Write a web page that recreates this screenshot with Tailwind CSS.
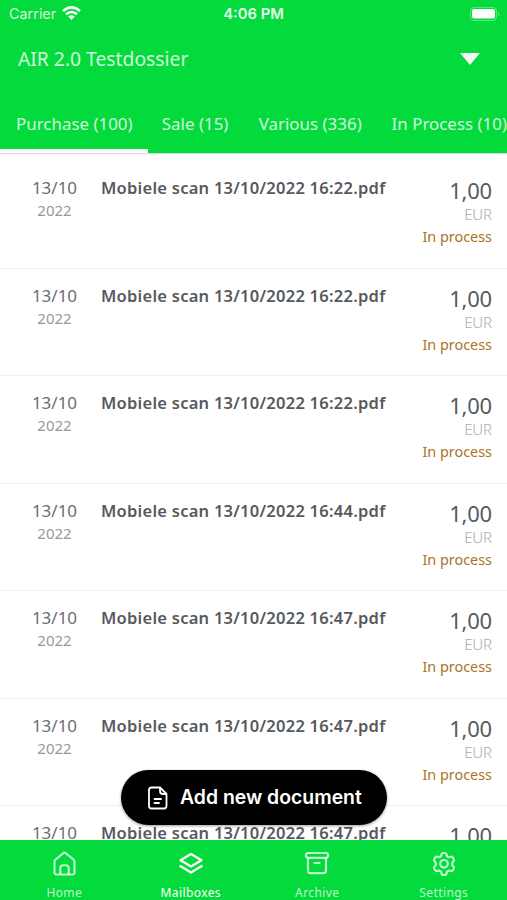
<!DOCTYPE html>
<html lang="en">
<head>
<meta charset="utf-8">
<title>Mailboxes</title>
<script src="https://cdn.jsdelivr.net/npm/@tailwindcss/browser@4"></script>
</head>
<body class="bg-white">
<div class="relative flex h-[900px] w-[507px] flex-col overflow-hidden bg-white font-['Noto_Sans',sans-serif] whitespace-nowrap">
  <header class="flex h-[154px] shrink-0 flex-col border-b border-[#c9e0cf] bg-[#03da3c] text-white">
    <div class="grid h-7 grid-cols-3 items-center pl-[9px] pr-[7px] font-[Inter,sans-serif]">
      <div class="flex items-center gap-1.5 text-[14.4px] text-white/80"><span>Carrier</span>
        <svg class="mb-0.5 h-[14px] w-[19px]" viewBox="0 0 19 14" fill="none" stroke="#fff" stroke-width="2.5"><path d="M1 5.1Q9.500-2.300 18 5.100M4 8.300q5.500-4.600 11 0"/><path d="M6.200 10.600q3.300-2.700 6.600 0L9.500 14z" fill="#fff" stroke="none"/></svg>
      </div>
      <div class="-ml-[2px] text-center text-[14.8px] font-semibold text-white/90">4:06 PM</div>
      <svg class="h-[14px] w-[30px] justify-self-end" viewBox="0 0 30 14"><rect x=".5" y=".5" width="26" height="13" rx="3.5" fill="none" stroke="#fff" stroke-opacity=".35"/><rect x="2" y="2" width="23" height="9.500" rx="2" fill="#fff"/><path d="M28 5q2 2 0 4z" fill="#fff" fill-opacity=".5"/></svg>
    </div>
    <div class="flex h-[62px] items-center justify-between pl-[18px] pr-[27px]">
      <h1 class="text-[19.3px] text-white/80">AIR 2.0 Testdossier</h1>
      <svg class="h-3 w-5" viewBox="0 0 20 12"><path d="M0 0h20L10 12z" fill="#f4f4f4"/></svg>
    </div>
    <nav class="flex h-[63px] text-[16.9px] leading-[68px] tracking-[0.01px] text-white/80">
      <div class="w-[148px] border-b-[4px] border-white pl-4">Purchase (100)</div>
      <div class="w-[97px] pl-[14px]">Sale (15)</div>
      <div class="w-[132px] pl-[14px]">Various (336)</div>
      <div class="pl-[15px]">In Process (10)</div>
    </nav>
  </header>
  <main id="list" class="min-h-0 flex-1 overflow-hidden pt-[7px]"></main>
  <template id="row">
    <article class="flex h-[107.5px] border-b border-[#f0f0f0] pr-[15px] pl-[23px] text-[#555a60]">
      <div class="w-[63px] pt-4 text-center"><div class="text-[17px] leading-[22px] text-[#6b6e72]">13/10</div><div class="text-[15px] leading-[22px] text-[#999]">2022</div></div>
      <div class="doc flex-1 pt-4 pl-[15px] text-[16.5px] leading-[22px] font-semibold tracking-[0.25px]"></div>
      <div class="flex flex-col pt-4 text-right"><span class="text-[22px] leading-[27px] tracking-[-0.2px]">1,00</span><span class="text-[15px] leading-[20px] font-light tracking-[-0.1px] text-[#aaa]">EUR</span><span class="text-[14.4px] leading-[25px] text-[#aa7426]">In process</span></div>
    </article>
  </template>
  <footer class="grid h-[60px] shrink-0 grid-cols-4 bg-[#03da3c] pt-[11px] pl-px text-[12px] tracking-[0.4px] text-white/75">
    <div class="flex flex-col items-center gap-[8px]">
      <svg class="h-[26px] w-6" viewBox="0 0 24 26" fill="none" stroke="currentColor" stroke-width="2.100" stroke-linejoin="round"><path d="M2.500 10.500q0-1 .8-1.800L11.200 2.200q1.300-1 2.600 0l7.900 6.500q.8.800.8 1.800v11q0 2-2 2h-16q-2 0-2-2z"/><path d="M8.300 23.500V17q0-2.800 2.800-2.800h2.800q2.800 0 2.800 2.800v6.500"/></svg>
      <span class="leading-4">Home</span>
    </div>
    <div class="flex flex-col items-center gap-[8px] text-white">
      <svg class="h-[26px] w-[26px]" viewBox="0 0 26 26" fill="none" stroke="currentColor" stroke-width="2.300" stroke-linejoin="round"><path d="M13 3 23.500 9.200l-10.500 6.200L2.500 9.200z"/><path d="m1.500 14.500 11.500 7 11.500-7"/></svg>
      <span class="leading-4">Mailboxes</span>
    </div>
    <div class="flex flex-col items-center gap-[8px]">
      <svg class="h-[26px] w-[26px]" viewBox="0 0 26 26" fill="none" stroke="currentColor" stroke-width="2.200" stroke-linejoin="round" stroke-linecap="round"><rect x="2" y="2" width="22" height="4.800" rx="2"/><path d="M4 7v12.500q0 2.700 2.500 2.700h13q2.500 0 2.500-2.700V7M10.500 12h5"/></svg>
      <span class="leading-4">Archive</span>
    </div>
    <div class="flex flex-col items-center gap-[8px]">
      <svg class="h-[26px] w-[26px]" viewBox="0 0 26 26" fill="none" stroke="currentColor" stroke-width="2.200" stroke-linejoin="round"><path d="M10.700 3q.4-1 1.300-1h2q.9 0 1.300 1l.7 2.200 1.800 1 2.300-.5q1-.2 1.500.6l1.200 2q.5.900-.1 1.600L21.200 12v2l1.500 1.900q.6.700.1 1.600l-1.200 2q-.5.800-1.500.600l-2.300-.5-1.800 1-.7 2.400q-.4 1-1.300 1h-2q-.9 0-1.300-1L10 20.600l-1.800-1-2.300.5q-1 .2-1.500-.6l-1.200-2q-.5-.9.100-1.600L4.800 14v-2L3.300 9.900q-.6-.7-.1-1.600l1.200-2q.5-.8 1.500-.6l2.300.5 1.800-1z"/><circle cx="13" cy="12.800" r="3.800"/></svg>
      <span class="leading-4">Settings</span>
    </div>
  </footer>
  <button class="absolute top-[770px] left-[121px] flex h-[55px] w-[266px] items-center gap-[11px] rounded-full bg-black pl-[26px] font-[Inter,sans-serif] text-[19.4px] font-semibold text-white shadow-[0_1px_3px_rgba(0,0,0,0.4)]">
    <svg class="h-6 w-[22px]" viewBox="0 0 22 24" fill="none" stroke="#fff" stroke-width="1.800" stroke-linejoin="round" stroke-linecap="round"><path d="M4.500 1.500h8.500L19.500 8v12q0 2.500-2.500 2.500H4.500Q2 22.500 2 20V4q0-2.500 2.500-2.500zM13 1.500V5q0 3 3 3h3.500M7.500 13H14M7.500 17H12"/></svg>
    <span class="pt-px">Add new document</span>
  </button>
</div>
<script>
const times = ['16:22', '16:22', '16:22', '16:44', '16:47', '16:47', '16:47'];
const list = document.getElementById('list');
for (const t of times) {
  const row = document.getElementById('row').content.cloneNode(true);
  row.querySelector('.doc').textContent = `Mobiele scan 13/10/2022 ${t}.pdf`;
  list.append(row);
}
</script>
</body>
</html>
